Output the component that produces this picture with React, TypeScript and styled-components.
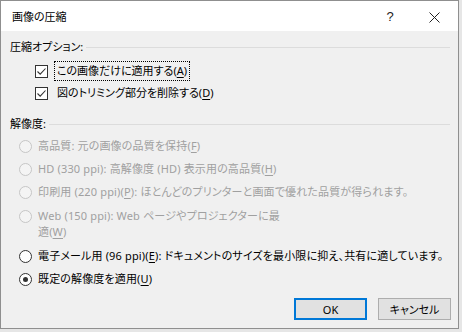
import styled, { createGlobalStyle } from 'styled-components';
import type { ReactNode } from 'react';

const GlobalStyle = createGlobalStyle`
  html, body {
    margin: 0;
    padding: 0;
    background: #e6e6e6;
  }

  body {
    font-family: "Noto Sans", "Noto Sans CJK JP", sans-serif;
    font-size: 11px;
    font-feature-settings: "palt";
    color: #000;
  }
`;

const Key = styled.span`
  text-decoration: underline;
  text-underline-offset: 2px;
`;

type RadioOption = {
  id: string;
  label: ReactNode;
  disabled?: boolean;
  checked?: boolean;
  wide?: boolean;
};

function getResolutionOptions(): RadioOption[] {
  return [
    {
      id: 'high',
      disabled: true,
      label: (
        <>
          高品質: 元の画像の品質を保持(<Key>F</Key>)
        </>
      )
    },
    {
      id: 'hd',
      disabled: true,
      label: (
        <>
          HD (330 ppi): 高解像度 (HD) 表示用の高品質(<Key>H</Key>)
        </>
      )
    },
    {
      id: 'print',
      disabled: true,
      label: (
        <>
          印刷用 (220 ppi)(<Key>P</Key>): ほとんどのプリンターと画面で優れた品質が得られます。
        </>
      )
    },
    {
      id: 'web',
      disabled: true,
      wide: true,
      label: (
        <>
          Web (150 ppi): Web ページやプロジェクターに最
          <br />
          適(<Key>W</Key>)
        </>
      )
    },
    {
      id: 'email',
      label: (
        <>
          電子メール用 (96 ppi)(<Key>E</Key>): ドキュメントのサイズを最小限に抑え、共有に適しています。
        </>
      )
    },
    {
      id: 'default',
      checked: true,
      label: (
        <>
          既定の解像度を適用(<Key>U</Key>)
        </>
      )
    }
  ];
}

function CheckMark() {
  return (
    <CheckBox>
      <svg width="11" height="11" viewBox="0 0 11 11">
        <polyline points="1.5,5.5 4.2,8.2 9.5,2.5" fill="none" stroke="#333" strokeWidth="1.1" />
      </svg>
    </CheckBox>
  );
}

export default function App() {
  const resolutionOptions = getResolutionOptions();

  return (
    <>
      <GlobalStyle />
      <Dialog>
        <TitleBar>
          <Title>画像の圧縮</Title>
          <HelpButton>?</HelpButton>
          <CloseButton>
            <svg width="11" height="11" viewBox="0 0 11 11">
              <path d="M0.5 0.5 L10.5 10.5 M10.5 0.5 L0.5 10.5" stroke="#222" strokeWidth="1" />
            </svg>
          </CloseButton>
        </TitleBar>
        <Body>
          <SectionHeader>
            <span>圧縮オプション:</span>
            <Rule />
          </SectionHeader>
          <CheckList>
            <CheckRow>
              <CheckMark />
              <FocusLabel>
                この画像だけに適用する(<Key>A</Key>)
              </FocusLabel>
            </CheckRow>
            <CheckRow>
              <CheckMark />
              <CheckLabel>
                図のトリミング部分を削除する(<Key>D</Key>)
              </CheckLabel>
            </CheckRow>
          </CheckList>
          <SectionHeader $gap={12}>
            <span>解像度:</span>
            <Rule />
          </SectionHeader>
          <RadioList>
            {resolutionOptions.map((option) => (
              <RadioRow key={option.id} $wide={option.wide}>
                <RadioCircle $disabled={option.disabled} $checked={option.checked} />
                <RadioLabel $disabled={option.disabled}>{option.label}</RadioLabel>
              </RadioRow>
            ))}
          </RadioList>
          <Footer>
            <DialogButton $primary>OK</DialogButton>
            <DialogButton>キャンセル</DialogButton>
          </Footer>
        </Body>
      </Dialog>
    </>
  );
}

const Dialog = styled.div`
  box-sizing: border-box;
  width: 459px;
  height: 329px;
  border: 1px solid #8f8f8f;
  background: #f0f0f0;
  display: flex;
  flex-direction: column;
`;

const TitleBar = styled.div`
  height: 30px;
  background: #fff;
  display: flex;
  align-items: center;
  padding-left: 11px;
  flex-shrink: 0;
`;

const Title = styled.div`
  flex: 1;
  font-size: 11px;
  line-height: 16px;
  margin-top: 1px;
`;

const HelpButton = styled.div`
  width: 20px;
  font-size: 13px;
  font-family: "Liberation Sans", sans-serif;
  text-align: center;
  margin-right: 29px;
  margin-top: 1px;
  color: #222;
`;

const CloseButton = styled.div`
  width: 11px;
  height: 11px;
  margin-right: 18px;
  margin-top: 2px;
  display: flex;
`;

const Body = styled.div`
  flex: 1;
  display: flex;
  flex-direction: column;
  padding: 8px 7px 8px 9px;
`;

const SectionHeader = styled.div<{ $gap?: number }>`
  display: flex;
  align-items: center;
  gap: 3px;
  line-height: 16px;
  margin-top: ${({ $gap }) => $gap ?? 0}px;
  padding-right: 1px;
`;

const Rule = styled.div`
  flex: 1;
  height: 1px;
  background: #dcdcdc;
  margin-top: 1px;
`;

const CheckList = styled.div`
  display: flex;
  flex-direction: column;
  padding-top: 5px;
  padding-left: 25px;
`;

const CheckRow = styled.div`
  display: flex;
  align-items: center;
  height: 22px;
  gap: 7px;
`;

const CheckBox = styled.div`
  box-sizing: border-box;
  width: 13px;
  height: 13px;
  border: 1px solid #333;
  background: #fff;
  display: flex;
  align-items: center;
  justify-content: center;
  flex-shrink: 0;
`;

const CheckLabel = styled.span`
  line-height: 16px;
  padding: 1px 2px;
`;

const FocusLabel = styled(CheckLabel)`
  outline: 1px dotted #000;
  outline-offset: 0;
`;

const RadioList = styled.div`
  display: flex;
  flex-direction: column;
  gap: 1px;
  padding-top: 3px;
  padding-left: 9px;
`;

const RadioRow = styled.div<{ $wide?: boolean }>`
  display: flex;
  align-items: flex-start;
  gap: 6px;
  padding: ${({ $wide }) => ($wide ? '4px 0' : '3px 0')};
  line-height: 16px;
`;

const RadioCircle = styled.div<{ $disabled?: boolean; $checked?: boolean }>`
  box-sizing: border-box;
  width: 13px;
  height: 13px;
  margin-top: 2px;
  border-radius: 50%;
  border: 1px solid ${({ $disabled }) => ($disabled ? '#c6c6c6' : '#333')};
  background: ${({ $disabled }) => ($disabled ? '#f4f4f4' : '#fff')};
  display: flex;
  align-items: center;
  justify-content: center;
  flex-shrink: 0;

  &::after {
    content: '';
    display: ${({ $checked }) => ($checked ? 'block' : 'none')};
    width: 5px;
    height: 5px;
    border-radius: 50%;
    background: #333;
  }
`;

const RadioLabel = styled.span<{ $disabled?: boolean }>`
  color: ${({ $disabled }) => ($disabled ? '#a0a0a0' : '#000')};
  white-space: nowrap;
  letter-spacing: 0.15px;
`;

const Footer = styled.div`
  margin-top: auto;
  display: flex;
  justify-content: flex-end;
  gap: 11px;
`;

const DialogButton = styled.button<{ $primary?: boolean }>`
  box-sizing: border-box;
  width: 73px;
  height: 22px;
  padding: 0;
  font-family: inherit;
  font-size: 11px;
  font-feature-settings: "palt";
  color: #000;
  background: #e1e1e1;
  border: ${({ $primary }) => ($primary ? '2px solid #0078d7' : '1px solid #adadad')};
`;
